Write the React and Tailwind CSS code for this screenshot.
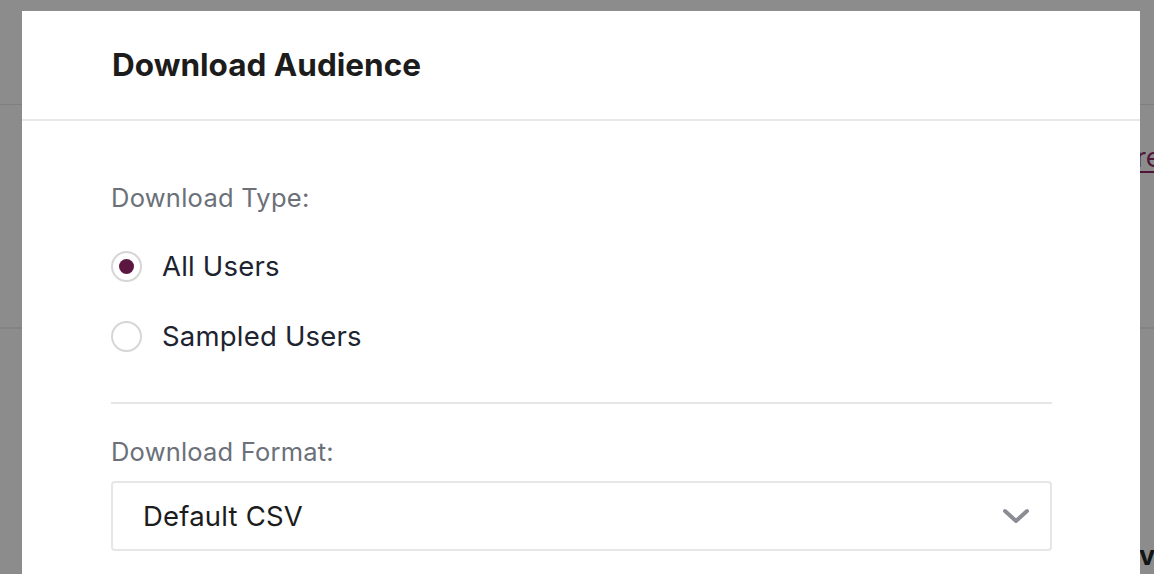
import React, { useState } from "react";

const RadioOption = ({ label, checked, onSelect }) => (
    <button
        type="button"
        onClick={onSelect}
        className="flex items-center h-[40px] text-left"
    >
        <span className="w-[31px] h-[31px] rounded-full border-2 border-[#d6d6d6] bg-white flex items-center justify-center shrink-0">
            {checked && <span className="w-[15px] h-[15px] rounded-full bg-[#5b1740]" />}
        </span>
        <span className="ml-[20px] text-[27.5px] leading-[36px] tracking-[0.2px] text-[#1d2430]">{label}</span>
    </button>
);

const App = () => {
    const [type, setType] = useState("all");

    return (
        <div
            className="relative w-[1154px] h-[574px] overflow-hidden bg-[#8c8c8c]"
            style={{ fontFamily: "Inter, 'Noto Sans', sans-serif" }}
        >
            {/* page behind the overlay */}
            <div className="absolute inset-x-0 top-[104px] h-px bg-[#7f7f7f]" />
            <div className="absolute inset-x-0 top-[327px] h-[2px] bg-[#838383]" />
            <div className="absolute left-[1136px] top-[140px] text-[27px] leading-[36px] text-[#4e1538] underline underline-offset-4">
                re
            </div>
            <div className="absolute left-[1139px] top-[538px] text-[27px] leading-[36px] font-bold text-[#141414]">
                v
            </div>

            {/* modal */}
            <div className="absolute left-[22px] top-[11px] w-[1118px] h-[600px] bg-white">
                <div className="h-[110px] flex items-center pl-[90px] border-b-2 border-[#e8e8e8]">
                    <h2 className="text-[31.5px] leading-[40px] font-bold text-[#1c1c1c]">Download Audience</h2>
                </div>

                <div className="pl-[89px] pr-[88px]">
                    <div className="mt-[61px] text-[25.5px] leading-[32px] tracking-[0.25px] text-[#6b7079]">Download Type:</div>

                    <div className="mt-[32px] flex flex-col gap-[30px]">
                        <RadioOption label="All Users" checked={type === "all"} onSelect={() => setType("all")} />
                        <RadioOption label="Sampled Users" checked={type === "sampled"} onSelect={() => setType("sampled")} />
                    </div>

                    <div className="mt-[46px] h-[2px] bg-[#e6e6e6]" />

                    <div className="mt-[32px] text-[25.5px] leading-[32px] tracking-[0.2px] text-[#6b7079]">Download Format:</div>

                    <div className="mt-[13px] h-[70px] border-2 border-[#e6e6e6] rounded-[4px] flex items-center justify-between pl-[30px] pr-[20px]">
                        <span className="text-[27.5px] leading-[36px] tracking-[0.2px] text-[#1c1c1c]">Default CSV</span>
                        <svg width="28" height="18" viewBox="0 0 28 18" fill="none">
                            <path d="M3 4 L14 14 L25 4" stroke="#8a8e94" strokeWidth="4" strokeLinecap="round" strokeLinejoin="round" />
                        </svg>
                    </div>
                </div>
            </div>
        </div>
    );
};

export default App;
